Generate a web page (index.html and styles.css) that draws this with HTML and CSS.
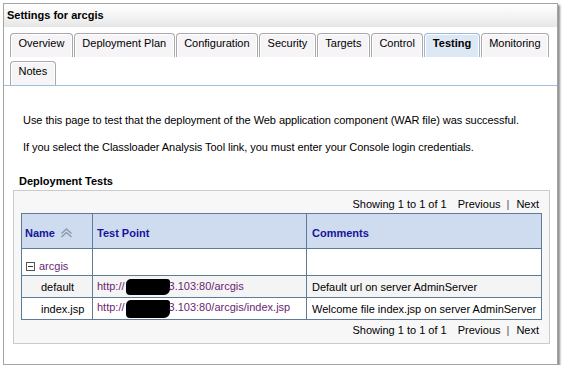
FILE: index.html
```html
<!DOCTYPE html>
<html lang="en">
<head>
  <meta charset="UTF-8">
  <title>Settings for arcgis</title>
  <link rel="stylesheet" href="styles.css">
</head>
<body>
  <div class="panel">
    <div class="panel-header">Settings for arcgis</div>

    <ul class="tabs">
      <li class="tab">Overview</li>
      <li class="tab">Deployment Plan</li>
      <li class="tab">Configuration</li>
      <li class="tab">Security</li>
      <li class="tab">Targets</li>
      <li class="tab">Control</li>
      <li class="tab tab-active">Testing</li>
      <li class="tab">Monitoring</li>
      <li class="tab">Notes</li>
    </ul>

    <div class="content">
      <p class="intro">Use this page to test that the deployment of the Web application component (WAR file) was successful.</p>
      <p class="intro intro-second">If you select the Classloader Analysis Tool link, you must enter your Console login credentials.</p>

      <h3 class="section-title">Deployment Tests</h3>
      <div class="tests-box">
        <div class="pager">
          <span>Showing 1 to 1 of 1</span>
          <span class="pager-link">Previous</span>
          <span class="pager-sep">|</span>
          <span class="pager-link">Next</span>
        </div>

        <table class="tests-table">
          <colgroup>
            <col class="col-name">
            <col class="col-point">
            <col class="col-comments">
          </colgroup>
          <tr class="head-row">
            <th>Name
              <svg class="sort-icon" width="13" height="10" viewBox="0 0 13 10">
                <polyline points="1.5,5.5 6.5,1 11.5,5.5" fill="none" stroke="#8a98b4" stroke-width="1.4"/>
                <polyline points="1.5,9 6.5,4.5 11.5,9" fill="none" stroke="#8a98b4" stroke-width="1.4"/>
              </svg>
            </th>
            <th>Test Point</th>
            <th>Comments</th>
          </tr>
          <tr class="group-row">
            <td class="group-cell"><span class="collapse-box"></span><a class="link">arcgis</a></td>
            <td></td>
            <td></td>
          </tr>
          <tr class="item-row item-alt">
            <td class="item-name">default</td>
            <td><a class="link">http://<span class="redacted"></span>3.103:80/arcgis</a></td>
            <td>Default url on server AdminServer</td>
          </tr>
          <tr class="item-row">
            <td class="item-name">index.jsp</td>
            <td><a class="link">http://<span class="redacted redacted-b"></span>3.103:80/arcgis/index.jsp</a></td>
            <td>Welcome file index.jsp on server AdminServer</td>
          </tr>
        </table>

        <div class="pager pager-bottom">
          <span>Showing 1 to 1 of 1</span>
          <span class="pager-link">Previous</span>
          <span class="pager-sep">|</span>
          <span class="pager-link">Next</span>
        </div>
      </div>
    </div>
  </div>
</body>
</html>
```

FILE: styles.css
```css
/* Settings page */
body {
  margin: 0;
  padding: 0;
  background-color: #fff;
  font-family: "Liberation Sans", Arial, sans-serif;
  font-size: 11px;
  color: #000;
}

.panel {
  box-sizing: border-box;
  width: 555px;
  height: 362px;
  margin: 3px 0 0 3px;
  border: 1px solid #a4a4a4;
  background-color: #fff;
  box-shadow: 2px 2px 2px rgba(0, 0, 0, 0.45);
}

.panel-header {
  height: 23px;
  line-height: 22px;
  padding-left: 3px;
  font-weight: bold;
  background: linear-gradient(#ffffff, #f2f2f2 60%, #e6e6e6);
}

.tabs {
  display: flex;
  flex-wrap: wrap;
  column-gap: 1px;
  row-gap: 4px;
  list-style: none;
  margin: 6px 0 0;
  padding: 0 0 0 6px;
  border-bottom: 1px solid #9fbfdc;
}

.tab {
  box-sizing: border-box;
  height: 24px;
  padding: 2px 7.5px 0;
  line-height: 14px;
  border: 1px solid #a9a9a9;
  border-bottom: none;
  border-radius: 4px 4px 0 0;
  background-color: #f6f4f6;
  box-shadow: inset 1px 1px 0 #fff, inset -1px 0 0 #fff;
}

.tab-active {
  font-weight: bold;
  background-color: #dde8f5;
  border-color: #9db7d6;
}

.content {
  padding-left: 9px;
}

.intro {
  margin: 27px 0 0;
  padding-left: 10px;
  line-height: 14px;
  letter-spacing: -0.06px;
}

.intro-second {
  margin-top: 13px;
}

.section-title {
  margin: 20px 0 2px;
  padding-left: 6px;
  font-size: 11px;
  line-height: 14px;
}

.tests-box {
  box-sizing: border-box;
  width: 537px;
  height: 154px;
  padding: 6px 7px 5px;
  border: 1px solid #cbcbcb;
  background-color: #f7f7f7;
}

.pager {
  display: flex;
  justify-content: flex-end;
  line-height: 14px;
  padding-right: 3px;
  margin-bottom: 2px;
}

.pager-bottom {
  margin: 3px 0 0;
}

.pager-link {
  margin-left: 11px;
}

.pager-sep {
  margin-left: 6px;
  margin-right: -4px;
  color: #555;
}

.tests-table {
  width: 521px;
  table-layout: fixed;
  border-collapse: collapse;
  border: 1px solid #5e7b99;
  background-color: #fff;
}

.col-name {
  width: 71px;
}

.col-point {
  width: 214px;
}

.tests-table th,
.tests-table td {
  border: 1px solid #5e7b99;
  padding: 0 4px;
  text-align: left;
  white-space: nowrap;
  overflow: hidden;
}

.head-row {
  height: 35px;
}

.head-row th {
  padding-top: 3px;
  padding-left: 4px;
  background-color: #cfdbee;
  color: #15159a;
  font-size: 11px;
}

.head-row th:first-child {
  padding-left: 3px;
}

.head-row th:last-child {
  padding-left: 5px;
}

.sort-icon {
  margin-left: 2px;
  vertical-align: -1px;
}

.group-row {
  height: 27px;
}

.group-row td {
  vertical-align: bottom;
  padding-bottom: 3px;
}

.group-cell {
  padding-left: 7px;
}

.collapse-box {
  display: inline-block;
  position: relative;
  width: 7px;
  height: 7px;
  margin-right: 4px;
  border: 1px solid #555;
  background-color: #fff;
  vertical-align: -1px;
}

.collapse-box::after {
  content: "";
  position: absolute;
  left: 1px;
  right: 1px;
  top: 3px;
  height: 1px;
  background-color: #333;
}

.item-row {
  height: 22px;
}

.item-alt td {
  background-color: #f4f4f4;
}

.item-name {
  padding-left: 19px !important;
}

.item-row td:last-child {
  padding-left: 5px;
}

.link {
  color: #6b1f73;
}

.redacted {
  display: inline-block;
  width: 44px;
  height: 16px;
  margin-left: 1px;
  margin-right: -1px;
  background-color: #000;
  border-radius: 5px 3px 6px 4px;
  vertical-align: -5px;
}

.redacted-b {
  height: 18px;
  vertical-align: -7px;
}
```
